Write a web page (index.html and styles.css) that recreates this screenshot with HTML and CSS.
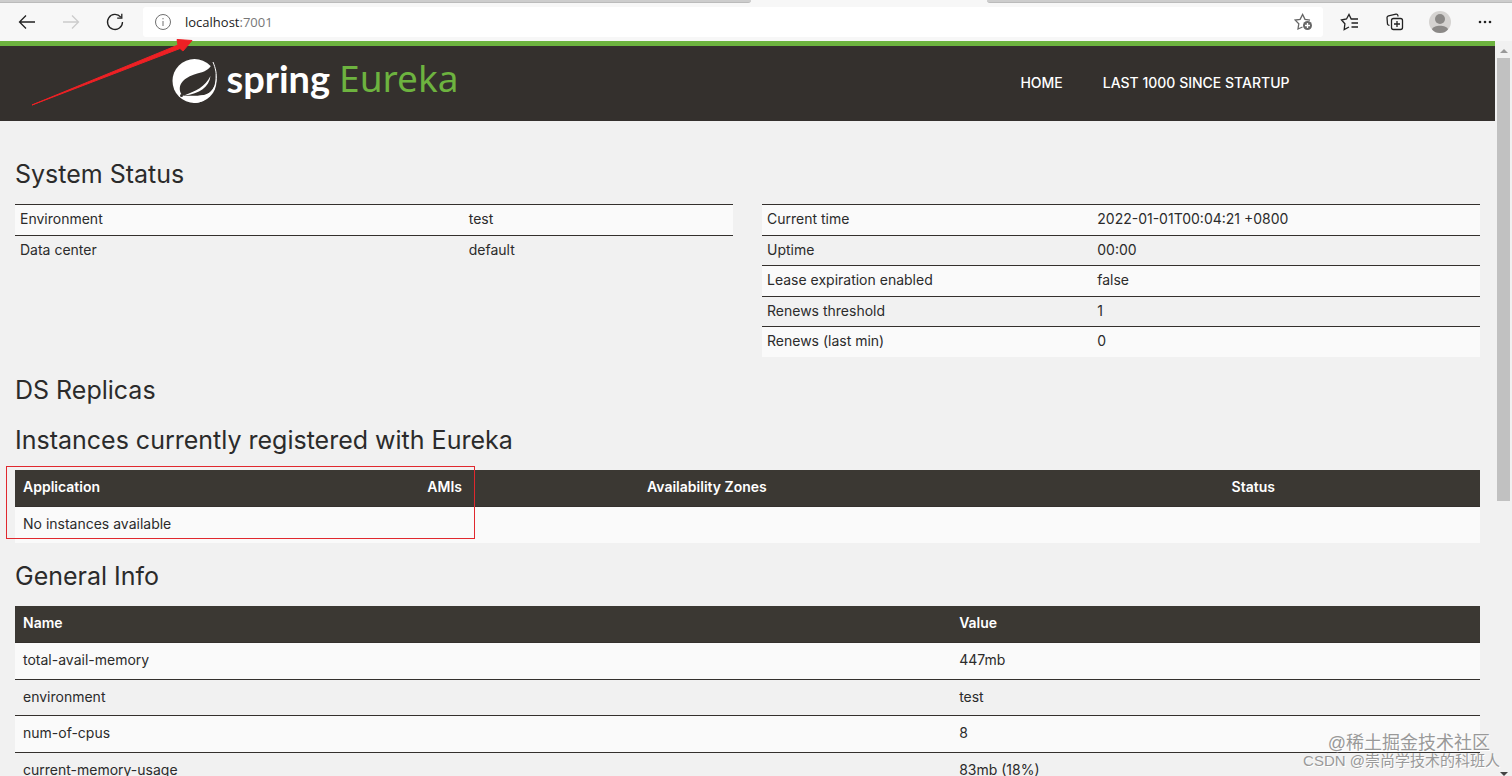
FILE: index.html
```html
<!DOCTYPE html>
<html lang="en">
<head>
  <meta charset="utf-8">
  <title>Eureka</title>
  <link rel="stylesheet" href="styles.css">
</head>
<body>
  <div class="tab-strip">
    <div class="tabs-left"></div>
    <div class="tabs-right"></div>
  </div>
  <div class="toolbar">
    <button class="icon-btn" aria-label="Back">
      <svg width="20" height="20" viewBox="0 0 20 20"><path d="M18 10H2.500M9 3.500L2.500 10L9 16.500"/></svg>
    </button>
    <button class="icon-btn" aria-label="Forward" disabled>
      <svg width="20" height="20" viewBox="0 0 20 20"><path d="M2 10H17.500M11 3.500L17.500 10L11 16.500"/></svg>
    </button>
    <button class="icon-btn" aria-label="Refresh">
      <svg width="20" height="20" viewBox="0 0 20 20"><path d="M17.500 10A7.500 7.500 0 1 1 15.800 5.200M16.800 1.800V6.200H12.200"/></svg>
    </button>
    <div class="address-bar">
      <svg class="info" width="18" height="18" viewBox="0 0 18 18"><circle cx="9" cy="9" r="7.500"/><path d="M9 8V13M9 5V6.300"/></svg>
      <div class="address" role="textbox" aria-label="Address" contenteditable="true" spellcheck="false"><span>localhost</span>:7001</div>
      <button class="add-favorite" aria-label="Add to favorites">
        <svg width="20" height="20" viewBox="0 0 20 20"><path d="M8.500 15L4 17L4.800 11.800L1.200 8.100L6.100 7.400L8.600 2.500L11 7.400L16 8.100"/><circle cx="13.500" cy="13.500" r="4.500" fill="#666" stroke="none"/><path stroke="#fff" d="M11 13.500H16M13.500 11V16"/></svg>
      </button>
    </div>
    <div class="actions">
      <button class="icon-btn" aria-label="Favorites">
        <svg width="20" height="20" viewBox="0 0 20 20"><path d="M9 15L4.200 17.500L4.900 11.700L1.500 8L6.500 7L9 2.500L11.200 7H18M11.500 11H18M11.500 15H18"/></svg>
      </button>
      <button class="icon-btn" aria-label="Collections">
        <svg width="20" height="20" viewBox="0 0 20 20"><path d="M4.500 13.500L3.300 13A2 2 0 0 1 2.400 11L2 5.500A2 2 0 0 1 3.500 3.800L11 2.200Q13 2 13 4.500M8.500 6.500H15.500A2 2 0 0 1 17.500 8.500V15.500A2 2 0 0 1 15.500 17.500H8.500A2 2 0 0 1 6.500 15.500V8.500A2 2 0 0 1 8.500 6.500M12 9V15M9 12H15"/></svg>
      </button>
      <button class="icon-btn" aria-label="Profile">
        <svg class="avatar" width="22" height="22" viewBox="0 0 22 22"><circle cx="11" cy="11" r="11" fill="#d5d3d1"/><circle cx="11" cy="8" r="5" fill="#8b8987"/><path fill="#8b8987" d="M3 18.500C4 13.500 18 13.500 19 18.500Q16 22 11 22T3 18.500Z"/></svg>
      </button>
      <button class="icon-btn" aria-label="More">
        <svg class="dots" width="20" height="20" viewBox="0 0 20 20"><circle cx="5" cy="10" r="1.300"/><circle cx="10" cy="10" r="1.300"/><circle cx="15" cy="10" r="1.300"/></svg>
      </button>
    </div>
  </div>

  <div class="viewport">
    <div class="page">
      <nav class="navbar">
        <div class="container">
          <a class="brand" href="#">
            <svg width="46" height="46" viewBox="0 0 46 46">
              <circle cx="22.500" cy="23" r="22" fill="#fff"/>
              <path fill="#34302d" d="M41 4C38 11 34 13 29 14.500C24 16 19 17 14 20.500C9 24 7 28 8 33C8.500 35 9 36 11 37.500C15 38 25 38 33 37C37 36 40 33 43 27C45 20 43 11 41 4Z"/>
              <path fill="none" stroke="#fff" d="M41 4C43.500 10 45 16 44 23C43 30 40 35 36 39"/>
              <path fill="#fff" d="M38.500 18C37 29 28 36 12 37.500C24 33 33 29 38.500 18Z"/>
              <path fill="#fff" d="M12 38.500C22 37.500 35 40 41 31C38 39 31 45 22 45Z"/>
              <circle cx="9.500" cy="37.500" r="1.500" fill="#34302d"/>
            </svg>
            <span class="brand-spring">spring</span>
            <span class="brand-eureka">Eureka</span>
          </a>
          <div class="nav-links">
            <a href="#">HOME</a>
            <a href="#">LAST 1000 SINCE STARTUP</a>
          </div>
        </div>
      </nav>

      <main class="content">
        <h1>System Status</h1>
        <div class="status">
          <table class="condensed instance">
            <tr><td>Environment</td><td>test</td></tr>
            <tr><td>Data center</td><td>default</td></tr>
          </table>
          <table class="condensed server">
            <tr><td>Current time</td><td>2022-01-01T00:04:21 +0800</td></tr>
            <tr><td>Uptime</td><td>00:00</td></tr>
            <tr><td>Lease expiration enabled</td><td>false</td></tr>
            <tr><td>Renews threshold</td><td>1</td></tr>
            <tr><td>Renews (last min)</td><td>0</td></tr>
          </table>
        </div>

        <h1 class="replicas">DS Replicas</h1>

        <h1>Instances currently registered with Eureka</h1>
        <div class="registered">
          <table class="apps">
            <thead>
              <tr><th>Application</th><th>AMIs</th><th>Availability Zones</th><th>Status</th></tr>
            </thead>
            <tbody>
              <tr><td colspan="4">No instances available</td></tr>
            </tbody>
          </table>
          <div class="highlight"></div>
        </div>

        <h1>General Info</h1>
        <table class="general">
          <thead>
            <tr><th>Name</th><th>Value</th></tr>
          </thead>
          <tbody>
            <tr><td>total-avail-memory</td><td>447mb</td></tr>
            <tr><td>environment</td><td>test</td></tr>
            <tr><td>num-of-cpus</td><td>8</td></tr>
            <tr><td>current-memory-usage</td><td>83mb (18%)</td></tr>
          </tbody>
        </table>
      </main>
    </div>
    <div class="scrollbar">
      <span class="arrow-up"></span>
      <div class="thumb"></div>
      <span class="arrow-down"></span>
    </div>
  </div>

  <svg class="pointer" width="164" height="70" viewBox="0 0 164 70"><path fill="#ee2024" stroke="#ee2024" stroke-linejoin="round" d="M2 67L148 7L147 1.500L162 2.500L153 13L150 10.500Z"/></svg>
  <div class="watermark">
    <p class="juejin">@稀土掘金技术社区</p>
    <p class="csdn">CSDN @崇尚学技术的科班人</p>
  </div>
</body>
</html>
```
FILE: styles.css
```css
* {
  box-sizing: border-box;
}

body {
  margin: 0;
  height: 100vh;
  display: flex;
  flex-direction: column;
  overflow: hidden;
  background: #f1f1f1;
  color: #2b2b2b;
  font-family: Inter, sans-serif;
  font-size: 14px;
  line-height: 20px;
}

button {
  padding: 0;
  border: 0;
  background: none;
}

svg {
  display: block;
}

/* browser chrome */
.tab-strip {
  display: flex;
  justify-content: space-between;
  height: 3px;
  background: #f7f7f7;
}

.tabs-left,
.tabs-right {
  background: #cdcdcd;
  border-bottom: 1px solid #bbb;
}

.tabs-left {
  width: 49.7%;
  border-bottom-right-radius: 3px;
}

.tabs-right {
  width: 34.7%;
  border-bottom-left-radius: 3px;
}

.toolbar {
  display: flex;
  align-items: center;
  height: 38px;
  padding-left: 17px;
  background: #f7f7f7;
}

.icon-btn {
  display: flex;
  justify-content: center;
  width: 20px;
  margin-right: 24px;
}

.icon-btn svg,
.add-favorite svg {
  fill: none;
  stroke: #222;
  stroke-width: 1.3;
}

.icon-btn:disabled svg {
  stroke: #ccc;
}

.icon-btn .avatar {
  flex: none;
  stroke: none;
}

.icon-btn .dots {
  fill: #222;
  stroke: none;
}

.address-bar {
  flex: 1;
  display: flex;
  align-items: center;
  height: 30px;
  margin-left: -6px;
  padding: 0 9px 0 11px;
  background: #fff;
  border-radius: 3px;
}

.info {
  fill: none;
  stroke: #707070;
}

.address {
  flex: 1;
  margin-left: 13px;
  color: #777;
  font-family: "Open Sans", sans-serif;
  font-size: 13px;
  outline: none;
}

.address span {
  color: #222;
}

.add-favorite svg {
  stroke: #666;
}

.actions {
  display: flex;
  align-items: center;
  gap: 25px;
  padding: 0 17px;
}

.actions .icon-btn {
  margin: 0;
}

/* eureka page */
.viewport {
  flex: 1;
  display: flex;
  min-height: 0;
  overflow: hidden;
}

.page {
  flex: 1;
}

.navbar {
  background: #34302d;
  border-top: 5px solid #6db33f;
}

.container {
  display: flex;
  justify-content: space-between;
  align-items: center;
  max-width: 1170px;
  height: 75px;
  margin: 0 auto;
  padding: 0 23px 6px 9px;
}

.brand {
  display: flex;
  align-items: center;
  text-decoration: none;
  line-height: 40px;
}

.brand-spring {
  margin: 0 9px 6px 9px;
  color: #fff;
  font-family: Lato, sans-serif;
  font-size: 38px;
  font-weight: bold;
}

.brand-eureka {
  margin-bottom: 6px;
  color: #6db33f;
  font-family: "Noto Sans", sans-serif;
  font-size: 37px;
}

.nav-links a {
  padding: 20px;
  color: #fff;
  font-weight: 500;
  text-decoration: none;
}

.nav-links {
  display: flex;
  padding-top: 4px;
}

.content {
  padding: 20px 15px 0;
}

h1 {
  margin: 20px 0 17px;
  font-size: 25px;
  font-weight: 400;
  line-height: 26px;
}

.replicas {
  margin-bottom: 24px;
}

table {
  width: 100%;
  table-layout: fixed;
  border-spacing: 0;
}

th,
td {
  padding: 8px;
  text-align: left;
}

td {
  border-top: 1px solid #34302d;
}

th {
  padding: 7px 8px 9px;
  background: #3b3833;
  color: #fff;
  font-weight: 600;
}

tr:nth-child(odd) td {
  background: #fafafa;
}

td {
  padding: 7px 8px 8px;
}

tr:nth-child(odd) td {
  padding-bottom: 9px;
}

.condensed tr td {
  padding: 4px 5px 5px;
}

.condensed tr:nth-child(odd) td {
  padding-bottom: 6px;
}

.status {
  display: grid;
  grid-template-columns: 1fr 1fr;
  align-items: start;
  gap: 29px;
}

.instance td:first-child {
  width: 62.5%;
}

.server td:first-child {
  width: 46%;
}

.registered {
  position: relative;
}

.apps th:nth-child(1) {
  width: 27.6%;
}

.apps th:nth-child(2) {
  width: 15%;
}

.apps th:nth-child(3) {
  width: 39.9%;
}

.general th:first-child {
  width: 63.9%;
}

/* red marks over the page */
.highlight {
  position: absolute;
  top: -4px;
  left: -9px;
  width: 32%;
  height: 73px;
  border: 1px solid #e0282e;
}

.pointer {
  position: absolute;
  top: 38px;
  left: 30px;
}

.scrollbar {
  display: flex;
  flex-direction: column;
  align-items: center;
  width: 17px;
  padding: 8px 1px 0;
}

.arrow-up,
.arrow-down {
  border: 4px solid transparent;
}

.arrow-up {
  border-top: 0;
  border-bottom-color: #999;
}

.arrow-down {
  margin-top: auto;
  border-bottom: 0;
  border-top-color: #444;
}

.thumb {
  width: 13px;
  height: 61%;
  margin-top: 5px;
  background: #c1c1c1;
}

.watermark {
  position: absolute;
  right: 12px;
  bottom: 6px;
  color: #999;
  font-family: "Liberation Sans", "Noto Sans CJK SC", sans-serif;
  text-align: right;
  text-shadow: 1px 1px 0 #fff;
}

.watermark p {
  margin: 0;
}

.juejin {
  padding-right: 10px;
  font-size: 18px;
  line-height: 18px;
}

.csdn {
  font-size: 15px;
  line-height: 18px;
}
```
